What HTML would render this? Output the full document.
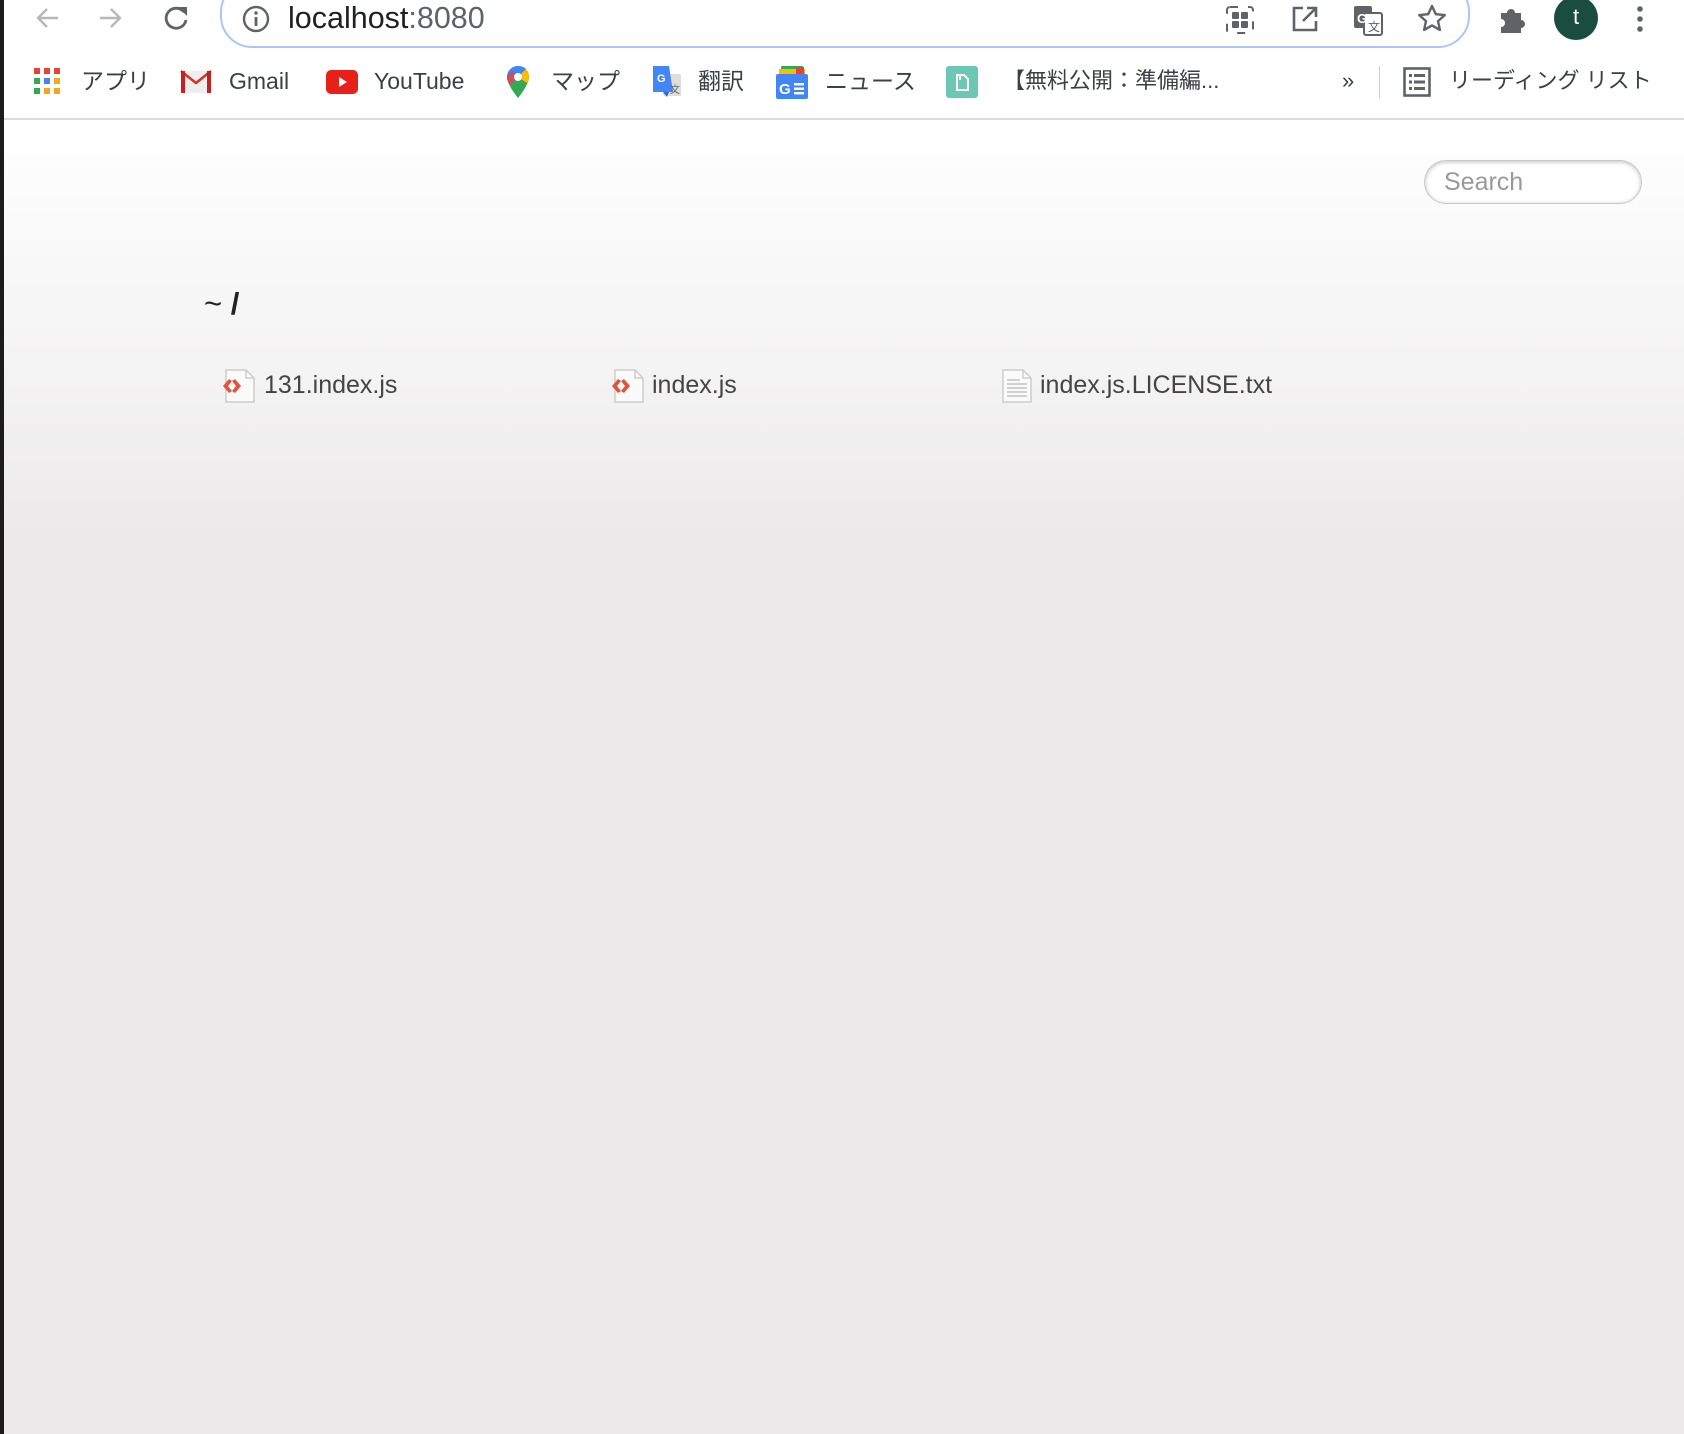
<!DOCTYPE html>
<html><head><meta charset="utf-8">
<style>
html,body{margin:0;padding:0;width:1684px;height:1434px;overflow:hidden}
body{position:relative;font-family:"Liberation Sans","Noto Sans CJK JP",sans-serif;background:#fff}
.abs{position:absolute}
.page{position:absolute;left:0;top:120px;width:1684px;height:1314px;background:linear-gradient(#ffffff 0px,#f4f3f3 260px,#ebe9ea 420px,#ebe9ea 1314px)}
.strip{position:absolute;left:0;top:0;width:4px;height:1434px;background:#1c1c1c}
.bm{position:absolute;top:66px;font-size:23px;color:#3c4043;line-height:30px}
.file{position:absolute;top:368px;font-size:25px;color:#444;line-height:34px}
</style></head><body>
<div class="page"></div>
<svg class="abs" style="left:30px;top:4px" width="36" height="32" viewBox="0 0 36 32"><path d="M28 14H8M17 5l-9 9 9 9" fill="none" stroke="#b8b8b8" stroke-width="2.4"/></svg>
<svg class="abs" style="left:94px;top:4px" width="36" height="32" viewBox="0 0 36 32"><path d="M6 14h20M17 5l9 9-9 9" fill="none" stroke="#b8b8b8" stroke-width="2.4"/></svg>
<svg class="abs" style="left:158px;top:2px" width="36" height="34" viewBox="0 0 36 34"><path d="M26 10A10 10 0 1 0 28 18" fill="none" stroke="#5f6368" stroke-width="2.8"/><path d="M20 5h9v9z" fill="#5f6368"/></svg>
<div class="abs" style="left:220px;top:-20px;width:1246px;height:64px;border:2.5px solid #a8c7fa;border-radius:32px;background:#fff"></div>
<svg class="abs" style="left:241px;top:4px" width="30" height="30" viewBox="0 0 30 30"><circle cx="15" cy="15" r="12" fill="none" stroke="#5f6368" stroke-width="2.4"/><rect x="13.6" y="13" width="2.8" height="9" fill="#5f6368"/><circle cx="15" cy="9" r="1.7" fill="#5f6368"/></svg>
<div class="abs" style="left:288px;top:0px;font-size:30.5px;color:#202124;line-height:36px">localhost<span style="color:#5f6368">:8080</span></div>
<svg class="abs" style="left:1224px;top:4px" width="32" height="32" viewBox="0 0 32 32"><rect x="3" y="3" width="26" height="26" rx="3" fill="none" stroke="#5f6368" stroke-width="2" stroke-dasharray="8 10" /><rect x="8" y="8" width="7" height="7" rx="1" fill="#5f6368"/><rect x="17" y="8" width="7" height="7" rx="1" fill="#5f6368"/><rect x="8" y="17" width="7" height="7" rx="1" fill="#5f6368"/><rect x="17" y="17" width="7" height="7" rx="1" fill="#5f6368"/></svg>
<svg class="abs" style="left:1290px;top:4px" width="30" height="30" viewBox="0 0 30 30"><path d="M13 4H4v22h22v-9" fill="none" stroke="#5f6368" stroke-width="2.6"/><path d="M17 4h9v9M26 4L13 17" fill="none" stroke="#5f6368" stroke-width="2.6"/></svg>
<svg class="abs" style="left:1352px;top:4px" width="32" height="32" viewBox="0 0 32 32"><rect x="2" y="2" width="18" height="22" rx="2" fill="#5f6368"/><rect x="12" y="9" width="18" height="22" rx="2" fill="#fff" stroke="#5f6368" stroke-width="2"/><text x="5" y="19" font-size="13" font-weight="bold" fill="#fff" font-family="Liberation Sans">G</text><text x="16" y="27" font-size="12" fill="#5f6368" font-family="Noto Sans CJK JP">文</text></svg>
<svg class="abs" style="left:1416px;top:3px" width="32" height="32" viewBox="0 0 32 32"><path d="M16 3l3.8 8.2 8.9.9-6.7 6 1.9 8.8L16 22.4 8.1 26.9 10 18.1l-6.7-6 8.9-.9z" fill="none" stroke="#5f6368" stroke-width="2.4" stroke-linejoin="round"/></svg>
<svg class="abs" style="left:1496px;top:4px" width="32" height="32" viewBox="0 0 32 32"><path d="M5 9h6a4 4 0 1 1 8 0h6v7a4 4 0 1 1 0 8v5H5v-6a4 4 0 1 0 0-8z" fill="#5f6368"/></svg>
<div class="abs" style="left:1554px;top:-4px;width:44px;height:44px;border-radius:50%;background:#1b4d3e;color:#fff;font-size:22px;text-align:center;line-height:42px">t</div>
<svg class="abs" style="left:1632px;top:2px" width="16" height="34" viewBox="0 0 16 34"><circle cx="8" cy="7" r="2.8" fill="#5f6368"/><circle cx="8" cy="17" r="2.8" fill="#5f6368"/><circle cx="8" cy="27" r="2.8" fill="#5f6368"/></svg>
<svg class="abs" style="left:34px;top:68px" width="28" height="28" viewBox="0 0 28 28">
<rect x="0" y="0" width="6" height="6" fill="#ea4335"/><rect x="10" y="0" width="6" height="6" fill="#ea4335"/><rect x="20" y="0" width="6" height="6" fill="#ea4335"/>
<rect x="0" y="10" width="6" height="6" fill="#34a853"/><rect x="10" y="10" width="6" height="6" fill="#4285f4"/><rect x="20" y="10" width="6" height="6" fill="#f4a61d"/>
<rect x="0" y="20" width="6" height="6" fill="#34a853"/><rect x="10" y="20" width="6" height="6" fill="#f4a61d"/><rect x="20" y="20" width="6" height="6" fill="#f4a61d"/></svg>
<div class="bm" style="left:81px">アプリ</div>
<svg class="abs" style="left:180px;top:70px" width="32" height="24" viewBox="0 0 32 24"><rect x="1" y="1" width="30" height="22" fill="#eee"/><path d="M1 1l15 12L31 1" fill="none" stroke="#d93025" stroke-width="2.5"/><rect x="1" y="1" width="4" height="22" fill="#c5221f"/><rect x="27" y="1" width="4" height="22" fill="#c5221f"/></svg>
<div class="bm" style="left:229px">Gmail</div>
<svg class="abs" style="left:326px;top:70px" width="32" height="24" viewBox="0 0 32 24"><rect width="32" height="24" rx="5" fill="#e62117"/><path d="M13 7l8 5-8 5z" fill="#fff"/></svg>
<div class="bm" style="left:374px">YouTube</div>
<svg class="abs" style="left:506px;top:65px" width="24" height="34" viewBox="0 0 24 34"><path d="M12 1C6 1 1 6 1 12c0 8 11 21 11 21s11-13 11-21C23 6 18 1 12 1z" fill="#34a853"/><path d="M12 1C6 1 1 6 1 12c0 3 1 5 3 8L20 4C18 2 15 1 12 1z" fill="#4285f4"/><path d="M20 4c2 2 3 5 3 8 0 2-1 4-2 6L12 12z" fill="#fbbc04"/><path d="M4 20L12 12 7 6C4 8 1 10 1 12c0 3 1 5 3 8z" fill="#ea4335" opacity=".8"/><circle cx="12" cy="12" r="4" fill="#fff"/></svg>
<div class="bm" style="left:551px">マップ</div>
<svg class="abs" style="left:651px;top:66px" width="32" height="32" viewBox="0 0 32 32"><rect x="12" y="8" width="18" height="22" rx="2" fill="#ddd"/><path d="M2 0h16l4 26H6l-4 0z" fill="#4285f4"/><path d="M12 26l4 5 2-5z" fill="#3367d6"/><text x="6" y="16" font-size="11" font-weight="bold" fill="#fff" font-family="Liberation Sans">G</text><text x="19" y="27" font-size="10" fill="#666" font-family="Noto Sans CJK JP">文</text></svg>
<div class="bm" style="left:698px">翻訳</div>
<svg class="abs" style="left:776px;top:65px" width="32" height="34" viewBox="0 0 32 34"><rect x="5" y="1" width="22" height="8" rx="1" fill="#34a853"/><rect x="3" y="4" width="26" height="8" fill="#fbbc04"/><rect x="20" y="2" width="8" height="8" fill="#ea4335"/><rect x="0" y="9" width="32" height="25" rx="2" fill="#4285f4"/><text x="3" y="29" font-size="15" font-weight="bold" fill="#fff" font-family="Liberation Sans">G</text><rect x="18" y="18" width="10" height="2.4" fill="#fff"/><rect x="18" y="22.5" width="10" height="2.4" fill="#fff"/><rect x="18" y="27" width="10" height="2.4" fill="#fff"/></svg>
<div class="bm" style="left:825px">ニュース</div>
<svg class="abs" style="left:946px;top:66px" width="32" height="32" viewBox="0 0 32 32"><rect width="32" height="32" rx="3" fill="#6cc7b3"/><path d="M11 9h7l4 4v11H11z" fill="none" stroke="#fff" stroke-width="2"/><path d="M14 10v4" stroke="#fff" stroke-width="2"/></svg>
<div class="bm" style="left:1003px;font-size:22px">【無料公開：準備編...</div>
<div class="bm" style="left:1342px;font-size:22px">»</div>
<div class="abs" style="left:1379px;top:66px;width:1px;height:32px;background:#ccc"></div>
<svg class="abs" style="left:1403px;top:67px" width="28" height="30" viewBox="0 0 28 30"><rect x="1.5" y="1.5" width="25" height="27" fill="none" stroke="#5f6368" stroke-width="2.6"/><g fill="#5f6368"><rect x="6" y="7" width="3" height="3"/><rect x="11" y="7" width="11" height="3"/><rect x="6" y="13.5" width="3" height="3"/><rect x="11" y="13.5" width="11" height="3"/><rect x="6" y="20" width="3" height="3"/><rect x="11" y="20" width="11" height="3"/></g></svg>
<div class="bm" style="left:1449px;font-size:22px">リーディング リスト</div>
<div class="abs" style="left:0;top:118px;width:1684px;height:2px;background:#dadce0"></div>
<div class="abs" style="left:1424px;top:160px;width:216px;height:42px;border:1.5px solid #c8c8c8;border-radius:22px;background:#fff;box-shadow:inset 0 1px 4px rgba(0,0,0,.25)"></div>
<div class="abs" style="left:1444px;top:166px;font-size:25px;color:#999;line-height:32px">Search</div>
<div class="abs" style="left:204px;top:284px;font-size:31px;color:#222;line-height:40px">~ <span style="font-weight:bold">/</span></div>
<svg class="abs" style="left:222px;top:369px" width="36" height="34" viewBox="0 0 36 34"><path d="M4 1h20l8 8v24H4z" fill="#fafafa" stroke="#ccc" stroke-width="1.5"/><path d="M24 1v8h8" fill="none" stroke="#ccc" stroke-width="1.5"/><path d="M7 10l-6 7 6 7 3-2-4-5 4-5zM13 10l6 7-6 7-3-2 4-5-4-5z" fill="#e0533d"/></svg>
<div class="file" style="left:264px">131.index.js</div>
<svg class="abs" style="left:611px;top:369px" width="36" height="34" viewBox="0 0 36 34"><path d="M4 1h20l8 8v24H4z" fill="#fafafa" stroke="#ccc" stroke-width="1.5"/><path d="M24 1v8h8" fill="none" stroke="#ccc" stroke-width="1.5"/><path d="M7 10l-6 7 6 7 3-2-4-5 4-5zM13 10l6 7-6 7-3-2 4-5-4-5z" fill="#e0533d"/></svg>
<div class="file" style="left:652px">index.js</div>
<svg class="abs" style="left:1002px;top:369px" width="30" height="34" viewBox="0 0 30 34"><path d="M1 1h20l8 8v24H1z" fill="#fafafa" stroke="#ccc" stroke-width="1.5"/><path d="M21 1v8h8" fill="none" stroke="#ccc" stroke-width="1.5"/><g fill="#d0d0d0"><rect x="5" y="10" width="13" height="2"/><rect x="5" y="14" width="20" height="2"/><rect x="5" y="18" width="20" height="2"/><rect x="5" y="22" width="20" height="2"/><rect x="5" y="26" width="20" height="2"/></g></svg>
<div class="file" style="left:1040px">index.js.LICENSE.txt</div>
<div class="strip"></div>
</body></html>
